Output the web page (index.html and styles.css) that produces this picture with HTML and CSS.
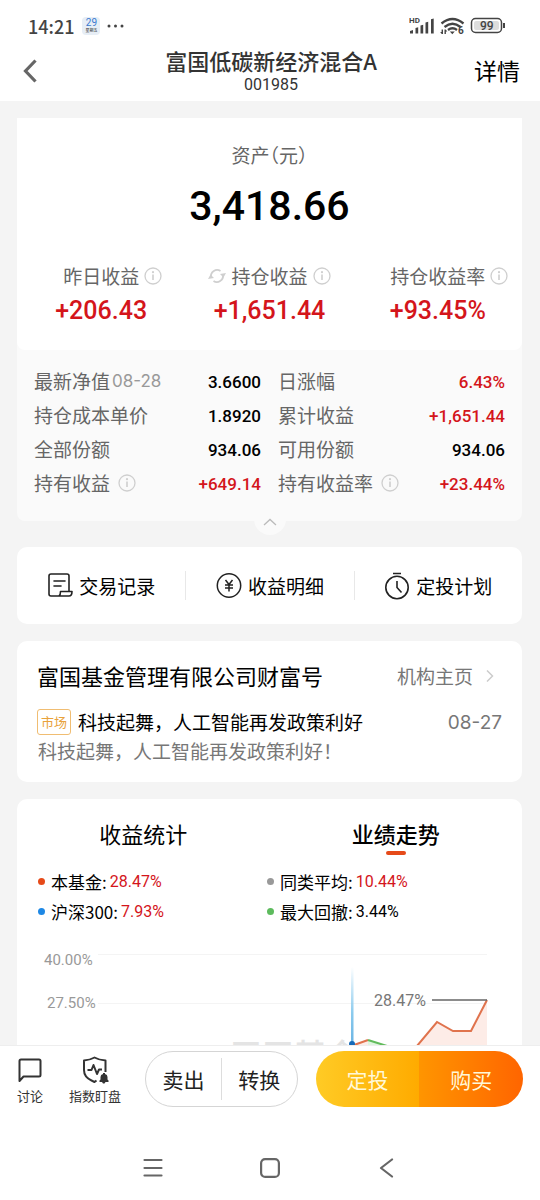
FILE: index.html
```html
<!DOCTYPE html>
<html lang="zh-CN">
<head>
<meta charset="utf-8">
<meta name="viewport" content="width=device-width, initial-scale=1">
<title>富国低碳新经济混合A</title>
<link rel="stylesheet" href="styles.css">
</head>
<body>
<svg class="defs" aria-hidden="true">
  <symbol id="info" viewBox="0 0 18 18">
    <circle cx="9" cy="9" r="8" fill="none" stroke="#cfcfcf" stroke-width="1.3"/>
    <path d="M9 7.6V13" stroke="#cfcfcf" stroke-width="1.6"/>
    <circle cx="9" cy="5.2" r="1.1" fill="#cfcfcf"/>
  </symbol>
</svg>
<div class="app">
  <div class="status">
    <span class="clock">14:21</span>
    <span class="calendar"><b>29</b><i>星期五</i></span>
    <svg class="dots" width="18" height="6" viewBox="0 0 18 6" fill="#444"><circle cx="3" cy="3" r="1.5"/><circle cx="9.500" cy="3" r="1.5"/><circle cx="16" cy="3" r="1.5"/></svg>
    <svg class="signals" width="98" height="24" viewBox="0 -2 98 24" fill="#444">
      <text x="0" y="7" class="tiny-hd">HD</text>
      <path d="M1 17.500v-2.500l3-1v3.500zM6.500 17.500v-5.500l2.700-.8v6.300zM11.500 17.500v-8l2.700-.8v8.800zM16.500 17.500v-11l2.700-.8v11.800zM22 17.500v-14.200l2.700-.8v15z"/>
      <g fill="none" stroke="#444" stroke-width="2.300"><path d="M32.500 7.500q11-9 22 0M35.500 11q8-6.500 16 0M39 14q4.500-3.500 9 0"/></g>
      <path d="M40.800 15.500h5l-2.500 2.700zM34 13.500v4.500h-1.300l-1.500-2h1.400v-2.500zM35.500 18v-4.500h1.200l1.600 2h-1.400v2.500z"/>
      <text x="49" y="18" class="tiny-six">6</text>
      <rect x="62.500" y="2.500" width="30" height="14" rx="4" fill="#fff" stroke="#444" stroke-width="1.5"/>
      <rect x="65" y="5" width="25" height="9" rx="2" fill="#ddd"/>
      <path d="M94 7h2v5h-2z"/>
      <text x="71" y="14" class="tiny-battery">99</text>
    </svg>
  </div>

  <header class="header">
    <button class="back" aria-label="返回"><svg width="16" height="24" viewBox="0 0 16 24" fill="none" stroke="#666" stroke-width="3.200"><path d="M13.500 1.500 3.500 12l10 10.500"/></svg></button>
    <div class="heading"><h1>富国低碳新经济混合A</h1><p>001985</p></div>
    <button class="detail">详情</button>
  </header>

  <main class="content">
    <section class="assets">
      <div class="summary">
        <p class="asset-label">资产（元）</p>
        <p class="asset-value">3,418.66</p>
        <div class="stats">
          <div class="stat"><div class="stat-label"><span></span>昨日收益<svg class="info"><use href="#info"/></svg></div><strong>+206.43</strong></div>
          <div class="stat"><div class="stat-label"><svg class="swap" viewBox="0 0 18 18"><g fill="none" stroke="#cfcfcf" stroke-width="1.8"><path d="M3 10a6.200 6.200 0 0 1 9.500-6M15 8a6.200 6.200 0 0 1-9.500 6"/></g><path d="M0 12l2.500-4.500L6 11zM18 6l-2.500 4.500L12 7z" fill="#cfcfcf"/></svg>持仓收益<svg class="info"><use href="#info"/></svg></div><strong>+1,651.44</strong></div>
          <div class="stat"><div class="stat-label"><span></span>持仓收益率<svg class="info"><use href="#info"/></svg></div><strong>+93.45%</strong></div>
        </div>
      </div>
      <dl class="facts">
        <div><dt>最新净值<small>08-28</small></dt><dd>3.6600</dd></div>
        <div><dt>日涨幅</dt><dd class="up">6.43%</dd></div>
        <div><dt>持仓成本单价</dt><dd>1.8920</dd></div>
        <div><dt>累计收益</dt><dd class="up">+1,651.44</dd></div>
        <div><dt>全部份额</dt><dd>934.06</dd></div>
        <div><dt>可用份额</dt><dd>934.06</dd></div>
        <div><dt>持有收益<svg class="info"><use href="#info"/></svg></dt><dd class="up">+649.14</dd></div>
        <div><dt>持有收益率<svg class="info"><use href="#info"/></svg></dt><dd class="up">+23.44%</dd></div>
      </dl>
      <button class="collapse" aria-label="收起"><svg width="14" height="8" viewBox="0 0 14 8" fill="none" stroke="#bbb" stroke-width="1.300"><path d="M1 7l6-5.500L13 7"/></svg></button>
    </section>

    <nav class="card quick">
      <button><svg width="26" height="26" viewBox="0 0 26 26" fill="none" stroke="#222" stroke-width="1.600" stroke-linejoin="round" stroke-linecap="round"><path d="M12 23H4q-2 0-2-2V3q0-2 2-2h16q2 0 2 2v15M7 8h11M7 13h7M12 23q1.500-1 1.500-4.500H25q0 4.500-3 4.500z"/></svg>交易记录</button>
      <button><svg width="26" height="26" viewBox="0 0 26 26" fill="none" stroke="#222" stroke-width="1.500"><circle cx="13" cy="12.500" r="11.700"/><path d="M9.500 7l3.500 4.500 3.500-4.500M13 11.500v7M9 12h8M9 15h8"/></svg>收益明细</button>
      <button><svg width="26" height="28" viewBox="0 0 26 28" fill="none" stroke="#222" stroke-width="1.600"><circle cx="13" cy="15.500" r="11.200"/><path d="M9 1.500h8M13 9v6.500l4.500 5"/></svg>定投计划</button>
    </nav>

    <section class="card news">
      <div class="news-head"><h2>富国基金管理有限公司财富号</h2><a href="#home">机构主页<svg width="8" height="12" viewBox="0 0 8 12" fill="none" stroke="#ccc" stroke-width="1.500"><path d="M1 .5 6.500 6 1 11.500"/></svg></a></div>
      <div class="news-row"><span class="tag">市场</span><h3>科技起舞，人工智能再发政策利好</h3><time>08-27</time></div>
      <p>科技起舞，人工智能再发政策利好！</p>
    </section>

    <section class="card trend">
      <div class="tabs"><button>收益统计</button><button class="active">业绩走势</button></div>
      <ul class="legend">
        <li class="fund">本基金: <b class="up">28.47%</b></li>
        <li class="peer">同类平均: <b class="up">10.44%</b></li>
        <li class="index">沪深300: <b class="up">7.93%</b></li>
        <li class="drawdown">最大回撤: <b>3.44%</b></li>
      </ul>
      <svg class="chart" viewBox="0 0 505 116" role="img" aria-label="业绩走势图">
        <defs>
          <linearGradient id="beam" x1="0" y1="0" x2="0" y2="1"><stop offset="0" stop-color="#8ccbee" stop-opacity="0"/><stop offset=".6" stop-color="#8ccbee"/><stop offset="1" stop-color="#6bb5e4"/></linearGradient>
        </defs>
        <path d="M81 24.500h389M81 73.500h389" stroke="#f4f4f4"/>
        <text x="27" y="35" class="axis">40.00%</text>
        <text x="30" y="78" class="axis">27.50%</text>
        <text x="213" y="137" class="watermark">天天基金</text>
        <path d="M335 116l16-6 19 6zM400 116l20-24 16 9h18l16-31v46z" fill="#fdece7"/>
        <path d="M351 110l19 6h-19z" fill="#dff5df"/>
        <rect x="334" y="37" width="2.500" height="76" fill="url(#beam)"/>
        <g fill="none" stroke-width="2"><path d="M337 115l14-5" stroke="#e0734d"/><path d="M351 110l19 6" stroke="#62bb5c"/><path d="M400 116l20-24 16 9h18l16-31" stroke="#e0734d"/><path d="M415 70h55" stroke="#666" stroke-width="1.500"/></g>
        <circle cx="335" cy="114" r="3" fill="#176ab8"/>
        <text x="357" y="76" class="callout">28.47%</text>
      </svg>
    </section>
  </main>

  <footer class="actions">
    <button class="tool"><svg width="26" height="28" viewBox="0 0 26 28" fill="none" stroke="#333" stroke-width="2" stroke-linejoin="round"><path d="M2.500 25V5q0-1.500 1.500-1.500h18q1.500 0 1.500 1.500v14q0 1.500-1.500 1.500H6.500z"/></svg>讨论</button>
    <button class="tool alert"><svg width="28" height="28" viewBox="0 0 28 28" fill="none" stroke="#333" stroke-width="2" stroke-linejoin="round"><path d="M24.500 16V4.500Q18 4 13.500 1.500 9 4 3 4.500V14q0 7 7.500 10.500l3 1.500 2-1.500M6.500 14h4l2-5 3.500 9 2-4.500h3"/><path d="M18.500 26v-1.500l1-1V21q0-2.500 2.500-3v-1h2v1q2.500.5 2.500 3v2.500l1 1V26h-3l-1 1.500h-1.500l-1-1.500z" fill="#333" stroke="none"/></svg>指数盯盘</button>
    <div class="pill outline"><button>卖出</button><button>转换</button></div>
    <div class="pill filled"><button class="plan">定投</button><button class="buy">购买</button></div>
  </footer>

  <nav class="system">
    <button aria-label="菜单"><svg width="20" height="20" viewBox="0 0 20 20" stroke="#666" stroke-width="2.200" stroke-linecap="round"><path d="M1.500 2h17M1.500 10h17M1.500 17.500h17"/></svg></button>
    <button aria-label="主页"><svg width="20" height="20" viewBox="0 0 20 20" fill="none" stroke="#666" stroke-width="2.200"><rect x="1.100" y="1.100" width="17.800" height="17.800" rx="4"/></svg></button>
    <button aria-label="后退"><svg width="20" height="20" viewBox="0 0 20 20" fill="none" stroke="#666" stroke-width="2.200" stroke-linecap="round" stroke-linejoin="round"><path d="M15 1.500 4 10l11 8.500"/></svg></button>
  </nav>
</div>
</body>
</html>
```
FILE: styles.css
```css
* { box-sizing: border-box; margin: 0; padding: 0; }
body {
  font-family: "Noto Sans CJK SC", sans-serif;
  color: #000;
  background: #fff;
}
button {
  font: inherit;
  color: inherit;
  background: none;
  border: 0;
  cursor: pointer;
}
svg { display: block; flex: none; }
.defs { position: absolute; width: 0; height: 0; }
.app { display: flex; flex-direction: column; height: 100vh; }

/* status bar */
.status {
  display: flex;
  align-items: center;
  height: 40px;
  padding: 12px 33px 0 28px;
  color: #444;
  flex: none;
}
.clock { font-size: 18px; font-weight: 500; }
.calendar {
  display: flex;
  flex-direction: column;
  align-items: center;
  width: 18px;
  height: 18px;
  margin: 0 6px 0 8px;
  border-radius: 4px;
  background: #e7eef6;
}
.calendar b { font: 10px/11px Roboto, sans-serif; color: #3c7bd0; }
.calendar i { font-size: 4px; line-height: 5px; font-style: normal; color: #222; }
.signals { margin-left: auto; }
.tiny-hd { font: bold 8px Roboto, sans-serif; }
.tiny-six { font: bold 10px Roboto, sans-serif; }
.tiny-battery { font: 500 12px Roboto, sans-serif; }

/* page header */
.header {
  display: grid;
  grid-template-columns: 1fr auto 1fr;
  align-items: center;
  height: 61px;
  padding: 0 20px 0 22px;
  flex: none;
}
.back { justify-self: start; }
.heading { text-align: center; color: #333; }
.heading h1 { font-size: 22px; line-height: 30px; font-weight: 500; }
.heading p { font: 16px/20px Roboto, sans-serif; padding-bottom: 2px; }
.detail { justify-self: end; font-size: 23px; line-height: 32px; padding-bottom: 2px; }

/* scrolling content */
.content {
  display: flex;
  flex-direction: column;
  flex: 1;
  min-height: 0;
  gap: 17px;
  padding: 17px 18px 0 17px;
  overflow-y: auto;
  scrollbar-width: none;
  background: #f4f4f4;
  border-bottom: 1px solid #eee;
}
.content > * { flex: none; }
.assets {
  position: relative;
  margin-bottom: 9px;
  background: #fafafa;
  border-radius: 0 0 8px 8px;
}
.summary {
  padding: 22px 0 20px;
  text-align: center;
  background: #fff;
  border-radius: 0 0 8px 8px;
}
.asset-label { font-size: 19px; line-height: 30px; color: #666; font-feature-settings: "halt"; }
.asset-value { font: 500 41px/50px Roboto, sans-serif; margin: 11px 0 29px; }
.stats { display: grid; grid-template-columns: repeat(3, 1fr); }
.stat-label {
  display: grid;
  grid-template-columns: 1fr auto 1fr;
  align-items: center;
  gap: 5px;
  font-size: 19px;
  line-height: 32px;
  color: #666;
}
.swap { width: 18px; height: 18px; justify-self: end; }
.info { width: 18px; height: 18px; }
.stat strong { display: block; font: 500 25px/38px Roboto, sans-serif; color: #d4151b; }
.facts {
  display: grid;
  grid-template-columns: 1fr 1fr;
  column-gap: 17px;
  padding: 15px 17px 20px;
}
.facts div { display: flex; justify-content: space-between; align-items: center; height: 34px; }
.facts dt { display: flex; align-items: center; font-size: 19px; line-height: 28px; padding-bottom: 2px; color: #666; }
.facts small { font: 17px Inter, sans-serif; color: #999; margin-left: 2px; }
.facts .info { margin-left: 8px; }
.facts dd { font: 500 17px Roboto, sans-serif; }
.facts dd.up, .up { color: #d4151b; }
.collapse {
  position: absolute;
  left: 50%;
  bottom: -14px;
  display: grid;
  place-items: center;
  width: 32px;
  height: 32px;
  padding-top: 6px;
  margin-left: -16px;
  border-radius: 50%;
  background: #fafafa;
}

.card { background: #fff; border-radius: 10px; }
.quick { display: grid; grid-template-columns: repeat(3, 1fr); padding: 24px 0; }
.quick button {
  display: flex;
  align-items: center;
  justify-content: center;
  gap: 6px;
  height: 29px;
  font-size: 19px;
}
.quick button + button { border-left: 1px solid #e8e8e8; }

.news { padding: 18px 20px 16px; }
.news-head, .news-row { display: flex; align-items: center; }
.news-head { justify-content: space-between; }
.news-head h2 { font-size: 22px; line-height: 33px; font-weight: 400; }
.news-head a {
  display: flex;
  align-items: center;
  gap: 13px;
  padding-right: 8px;
  font-size: 19px;
  line-height: 28px;
  color: #777;
  text-decoration: none;
}
.news-row { margin-top: 16px; }
.tag {
  padding: 0 3px;
  margin-right: 7px;
  font-size: 13px;
  line-height: 24px;
  color: #e9a23b;
  border: 1px solid #f0bd72;
  border-radius: 3px;
}
.news-row h3 { font-size: 19px; line-height: 28px; font-weight: 400; }
.news-row time { margin-left: auto; font: 19px Inter, sans-serif; color: #777; }
.news p { padding-left: 1px; font-size: 19px; line-height: 30px; color: #777; }

.trend { border-radius: 10px 10px 0 0; }
.tabs { display: grid; grid-template-columns: 1fr 1fr; padding-top: 18px; }
.tabs button { font-size: 22px; line-height: 32px; padding-bottom: 7px; }
.tabs .active { font-weight: 500; }
.tabs .active::after {
  content: "";
  display: block;
  width: 20px;
  height: 4px;
  margin: 2px auto -6px;
  border-radius: 2px;
  background: #e64a19;
}
.legend {
  display: grid;
  grid-template-columns: 1fr 1fr;
  padding: 10px 26px 4px 21px;
  list-style: none;
}
.legend li { display: flex; align-items: center; height: 30px; gap: 3px; font-size: 17px; }
.legend li::before { content: ""; width: 7px; height: 7px; margin-right: 3px; border-radius: 50%; background: #e64a19; }
.legend .peer::before { background: #999; }
.legend .index::before { background: #1e88e5; }
.legend .drawdown::before { background: #5dbb5d; }
.legend b { font: 16px Roboto, sans-serif; }
.chart { width: 100%; overflow: hidden; }
.axis { font: 15px Roboto, sans-serif; fill: #999; }
.callout { font: 16px Roboto, sans-serif; fill: #777; }
.watermark { font-size: 32px; font-weight: 500; fill: #e4e4e4; }

/* bottom actions */
.actions { display: flex; align-items: center; padding: 5px 17px 5px 17px; flex: none; }
.tool {
  display: flex;
  flex-direction: column;
  align-items: center;
  gap: 2px;
  padding-top: 3px;
  font-size: 13px;
  line-height: 20px;
  color: #333;
}
.alert { margin-left: 26px; }
.pill { display: flex; height: 56px; border-radius: 28px; overflow: hidden; font-size: 21px; }
.pill button { flex: 1; }
.outline { flex: 151; align-items: center; margin-left: 24px; border: 1px solid #d5d5d5; color: #222; }
.outline button { height: 42px; line-height: 40px; }
.outline button + button { border-left: 1px solid #ddd; }
.filled { flex: 208; margin-left: 18px; color: #fff8d8; }
.plan { background: linear-gradient(90deg, #ffcb25, #ffab00); }
.buy { background: linear-gradient(90deg, #ff9500, #ff6500); }

/* system navigation */
.system { display: flex; justify-content: center; gap: 97px; padding: 46px 0 22px; flex: none; }
```
